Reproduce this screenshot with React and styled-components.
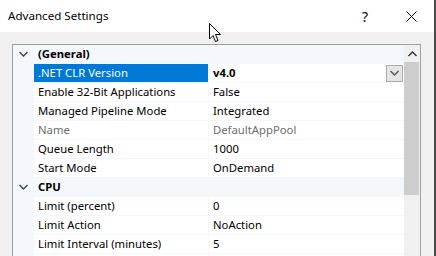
import styled, { createGlobalStyle } from 'styled-components';

const GlobalStyle = createGlobalStyle`
  html, body {
    margin: 0;
    padding: 0;
    background: #f0f0f0;
  }
  body {
    font-family: "Noto Sans", "Open Sans", sans-serif;
    font-size: 11.3px;
    color: #000;
  }
`

const LINE = '#f4f7fc';

const Window = styled.div`
  position: relative;
  width: 436px;
  height: 256px;
  overflow: hidden;
  box-sizing: border-box;
  background: #f0f0f0;
  border-right: 2px solid #4a4a4a;
`

const TitleBar = styled.div`
  display: flex;
  align-items: center;
  height: 32px;
  background: #fff;
  padding-left: 8px;
`

const Title = styled.div`
  flex: 1;
  font-size: 11.6px;
  padding-bottom: 1px;
`

const CaptionButton = styled.div`
  width: 46px;
  height: 32px;
  display: flex;
  align-items: center;
  justify-content: center;
  font-size: 14px;
`

const Body = styled.div`
  padding: 12px 13px 0 12px;
`

const Grid = styled.div`
  display: flex;
  border: 1px solid #a0a0a0;
  border-bottom: none;
  background: #fff;
  height: 220px;
`

const Rows = styled.div`
  flex: 1;
  display: flex;
  flex-direction: column;
`

const Row = styled.div`
  display: flex;
  height: 19px;
  box-sizing: border-box;
  border-bottom: 1px solid ${LINE};
  background: ${p => (p.$category ? LINE : '#fff')};
`

const Margin = styled.div`
  width: 21px;
  flex: none;
  background: ${LINE};
  display: flex;
  align-items: center;
  justify-content: center;
`

const NameCell = styled.div`
  width: 170px;
  flex: none;
  padding-left: 4px;
  line-height: 18px;
  white-space: nowrap;
  overflow: hidden;
  border-right: 1px solid ${LINE};
  background: ${p => (p.$selected ? '#0078d7' : 'transparent')};
  color: ${p => (p.$selected ? '#fff' : p.$readOnly ? '#6d6d6d' : '#000')};
`

const CategoryLabel = styled.div`
  padding-left: 4px;
  line-height: 18px;
  font-weight: 700;
`

const ValueCell = styled.div`
  flex: 1;
  display: flex;
  align-items: center;
  padding-left: 4px;
  line-height: 18px;
  font-weight: ${p => (p.$bold ? 700 : 400)};
  color: ${p => (p.$readOnly ? '#6d6d6d' : '#000')};
`

const ValueText = styled.span`
  flex: 1;
`

const DropButton = styled.div`
  width: 15px;
  height: 15px;
  margin-right: 1px;
  border: 1px solid #adadad;
  background: #e5e5e5;
  display: flex;
  align-items: center;
  justify-content: center;
`

const ScrollBar = styled.div`
  width: 16px;
  flex: none;
  display: flex;
  flex-direction: column;
  background: #f0f0f0;
`

const ScrollArrow = styled.div`
  height: 17px;
  display: flex;
  align-items: center;
  justify-content: center;
`

const Thumb = styled.div`
  height: 133px;
  margin: 0 1px 0 0;
  background: #cdcdcd;
`

const Cursor = styled.svg`
  position: absolute;
  left: 209px;
  top: 23px;
`

function Chevron({ up, color = '#444' }) {
  return (
    <svg width="9" height="6" viewBox="0 0 9 6">
      <path
        d={up ? 'M0.5 5 L4.5 1 L8.5 5' : 'M0.5 1 L4.5 5 L8.5 1'}
        fill="none"
        stroke={color}
        strokeWidth="1.4"
      />
    </svg>
  )
}

const general = [
  { name: '.NET CLR Version', value: 'v4.0', selected: true, bold: true, drop: true },
  { name: 'Enable 32-Bit Applications', value: 'False' },
  { name: 'Managed Pipeline Mode', value: 'Integrated' },
  { name: 'Name', value: 'DefaultAppPool', readOnly: true },
  { name: 'Queue Length', value: '1000' },
  { name: 'Start Mode', value: 'OnDemand' },
];

const cpu = [
  { name: 'Limit (percent)', value: '0' },
  { name: 'Limit Action', value: 'NoAction' },
  { name: 'Limit Interval (minutes)', value: '5' },
];

function Category({ label }) {
  return (
    <Row $category>
      <Margin>
        <Chevron />
      </Margin>
      <CategoryLabel>{label}</CategoryLabel>
    </Row>
  )
}

function Property({ p }) {
  return (
    <Row>
      <Margin />
      <NameCell $selected={p.selected} $readOnly={p.readOnly}>{p.name}</NameCell>
      <ValueCell $bold={p.bold} $readOnly={p.readOnly}>
        <ValueText>{p.value}</ValueText>
        {p.drop && (
          <DropButton>
            <Chevron color="#555" />
          </DropButton>
        )}
      </ValueCell>
    </Row>
  )
}

export default function App() {
  return (
    <>
      <GlobalStyle />
      <Window>
        <TitleBar>
          <Title>Advanced Settings</Title>
          <CaptionButton>?</CaptionButton>
          <CaptionButton>
            <svg width="11" height="11" viewBox="0 0 11 11">
              <path d="M0.5 0.5 L10.5 10.5 M10.5 0.5 L0.5 10.5" stroke="#000" strokeWidth="1" />
            </svg>
          </CaptionButton>
        </TitleBar>
        <Body>
          <Grid>
            <Rows>
              <Category label="(General)" />
              {general.map(p => <Property key={p.name} p={p} />)}
              <Category label="CPU" />
              {cpu.map(p => <Property key={p.name} p={p} />)}
              <Row>
                <Margin />
                <NameCell />
              </Row>
            </Rows>
            <ScrollBar>
              <ScrollArrow>
                <Chevron up color="#333" />
              </ScrollArrow>
              <Thumb />
            </ScrollBar>
          </Grid>
        </Body>
        <Cursor width="13" height="20" viewBox="0 0 13 20">
          <path d="M0.5 0.5 L0.5 16 L4 12.5 L6.5 18.5 L9 17.5 L6.5 11.5 L11.5 11.5 Z" fill="#fff" stroke="#000" strokeWidth="1" />
        </Cursor>
      </Window>
    </>
  )
}
